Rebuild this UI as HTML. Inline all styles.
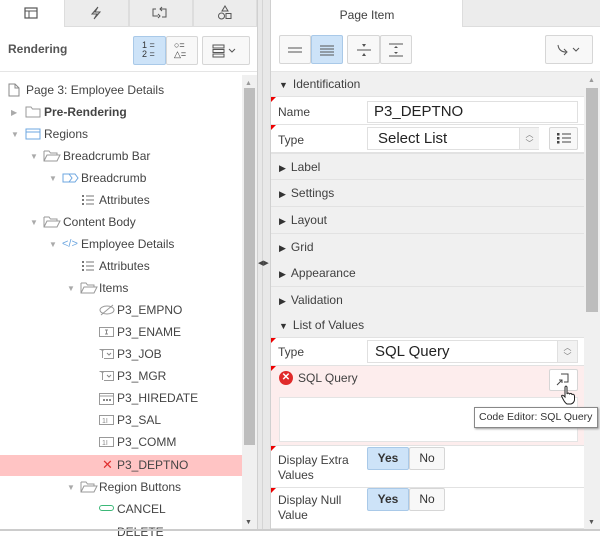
<!DOCTYPE html>
<html><head><style>
*{box-sizing:border-box;margin:0;padding:0}
body{width:600px;height:531px;overflow:hidden;background:#fff;font-family:"Liberation Sans",Arial,sans-serif;font-size:12px;color:#404040;position:relative}
.a{position:absolute}
.tab{position:absolute;top:0;height:27px;background:#ececec;border:1px solid #ddd;border-top:none}
.btn{position:absolute;border:1px solid #d6d6d6;background:#f8f8f8;border-radius:2px}
.row{position:absolute;left:0;height:22px;line-height:22px;white-space:nowrap;color:#444}
.tri{position:absolute;color:#aaa;font-size:8px}
.sec{position:absolute;left:271px;width:313px;height:27px;background:#f0f0f0;border-bottom:1px solid #e2e2e2;line-height:26px;padding-left:8px;color:#404040}
.sec b{font-size:9px;color:#333;margin-right:5px;font-weight:normal}
.prow{position:absolute;left:271px;width:313px;background:#fff;border-bottom:1px solid #e2e2e2}
.red{position:absolute;left:0;top:0;width:0;height:0;border-top:5px solid #e00;border-right:5px solid transparent}
.lbl{position:absolute;left:7px;color:#404040}
.inp{position:absolute;border:1px solid #e0e0e0;background:#fff;font-size:15px;color:#222;padding-left:6px}
</style></head><body>
<div class="a" style="left:0;top:0;width:257px;height:531px;background:#fff"></div>
<div class="tab" style="left:0;width:64px;background:#fff;border:none"></div>
<div class="tab" style="left:64px;width:65px"></div>
<div class="tab" style="left:129px;width:64px"></div>
<div class="tab" style="left:193px;width:64px"></div>
<svg class="a" style="left:24px;top:7px" width="14" height="12"><rect x="1" y="1" width="12" height="10" fill="none" stroke="#555" stroke-width="1.2"/><line x1="1" y1="4" x2="13" y2="4" stroke="#555"/><line x1="5" y1="4" x2="5" y2="11" stroke="#555"/></svg>
<svg class="a" style="left:89px;top:6px" width="14" height="14"><path d="M9 1 L3 8 H8 L5 13 M9 1 L6 6 H11 L5 13" fill="none" stroke="#555"/></svg>
<svg class="a" style="left:152px;top:6px" width="16" height="14"><path d="M4 3 H1 V10 H6 M10 11 H14 V3 H8 M6 8 L8 10 L6 12 M10 1 L8 3 L10 5" fill="none" stroke="#555"/></svg>
<svg class="a" style="left:217px;top:5px" width="16" height="16"><path d="M8 1 L11 6 H5 Z" fill="none" stroke="#555"/><circle cx="4.5" cy="11" r="3" fill="none" stroke="#555"/><rect x="9" y="8.5" width="5" height="5" fill="none" stroke="#555"/></svg>
<div class="a" style="left:0;top:27px;width:257px;height:45px;background:#fff;border-bottom:1px solid #e5e5e5"></div>
<div class="a" style="left:8px;top:42px;font-weight:bold;color:#555">Rendering</div>
<div class="btn" style="left:133px;top:36px;width:33px;height:29px;background:#cde3f8;border-color:#a9c9e8"></div>
<div class="a" style="left:142px;top:41px;font-size:9px;line-height:9px;color:#333">1 =<br>2 =</div>
<div class="btn" style="left:166px;top:36px;width:32px;height:29px"></div>
<div class="a" style="left:174px;top:41px;font-size:9px;line-height:9px;color:#333">○=<br>△=</div>
<div class="btn" style="left:202px;top:36px;width:48px;height:29px"></div>
<svg class="a" style="left:212px;top:44px" width="30" height="14"><rect x="1" y="1" width="11" height="3" fill="none" stroke="#555"/><rect x="1" y="5.5" width="11" height="3" fill="none" stroke="#555"/><rect x="1" y="10" width="11" height="3" fill="none" stroke="#555"/><path d="M17 5 L20 8 L23 5" fill="none" stroke="#555"/></svg>
<div class="a" style="left:242px;top:75px;width:15px;height:456px;background:#f0f0f0"></div>
<div class="a" style="left:245px;top:80px;font-size:7px;color:#999">▲</div>
<div class="a" style="left:244px;top:88px;width:11px;height:357px;background:#bdbdbd"></div>
<div class="a" style="left:245px;top:519px;font-size:7px;color:#555">▼</div>
<div class="row" style="top:455px;width:242px;height:21px;background:#ffc4c4"></div>
<svg class="a" style="left:8px;top:83px" width="12" height="14"><path d="M1 1 H7 L11 5 V13 H1 Z M7 1 V5 H11" fill="none" stroke="#888"/></svg>
<div class="row" style="top:79px;left:26px">Page 3: Employee Details</div>
<div class="tri" style="left:11px;top:108px">▶</div>
<svg class="a" style="left:25px;top:106px" width="16" height="12"><path d="M1 1 H6 L7.5 3 H15 V11 H1 Z" fill="none" stroke="#999"/></svg>
<div class="row" style="top:101px;left:44px;font-weight:bold">Pre-Rendering</div>
<div class="tri" style="left:11px;top:130px">▼</div>
<svg class="a" style="left:25px;top:128px" width="16" height="12"><rect x="1" y="1" width="14" height="10" fill="none" stroke="#6ea7e0"/><line x1="1" y1="4" x2="15" y2="4" stroke="#6ea7e0"/></svg>
<div class="row" style="top:123px;left:44px">Regions</div>
<div class="tri" style="left:30px;top:152px">▼</div>
<svg class="a" style="left:43px;top:150px" width="18" height="12"><path d="M1 1 H6 L7.5 3 H14 V5 M1 1 V11 H14 L17 5 H4 L1 11" fill="none" stroke="#999"/></svg>
<div class="row" style="top:145px;left:63px">Breadcrumb Bar</div>
<div class="tri" style="left:49px;top:174px">▼</div>
<svg class="a" style="left:62px;top:173px" width="17" height="10"><path d="M1 1 H13 L16 5 L13 9 H1 Z M7 1 L10 5 L7 9" fill="none" stroke="#6ea7e0"/></svg>
<div class="row" style="top:167px;left:81px">Breadcrumb</div>
<svg class="a" style="left:81px;top:194px" width="14" height="12"><g fill="#777"><rect x="1" y="1" width="2" height="2"/><rect x="1" y="5" width="2" height="2"/><rect x="1" y="9" width="2" height="2"/></g><g stroke="#777"><line x1="5" y1="2" x2="13" y2="2"/><line x1="5" y1="6" x2="13" y2="6"/><line x1="5" y1="10" x2="13" y2="10"/></g></svg>
<div class="row" style="top:189px;left:99px">Attributes</div>
<div class="tri" style="left:30px;top:218px">▼</div>
<svg class="a" style="left:43px;top:216px" width="18" height="12"><path d="M1 1 H6 L7.5 3 H14 V5 M1 1 V11 H14 L17 5 H4 L1 11" fill="none" stroke="#999"/></svg>
<div class="row" style="top:211px;left:63px">Content Body</div>
<div class="tri" style="left:49px;top:240px">▼</div>
<div class="a" style="left:62px;top:238px;font-size:11px;color:#6ea7e0">&lt;/&gt;</div>
<div class="row" style="top:233px;left:81px">Employee Details</div>
<svg class="a" style="left:81px;top:260px" width="14" height="12"><g fill="#777"><rect x="1" y="1" width="2" height="2"/><rect x="1" y="5" width="2" height="2"/><rect x="1" y="9" width="2" height="2"/></g><g stroke="#777"><line x1="5" y1="2" x2="13" y2="2"/><line x1="5" y1="6" x2="13" y2="6"/><line x1="5" y1="10" x2="13" y2="10"/></g></svg>
<div class="row" style="top:255px;left:99px">Attributes</div>
<div class="tri" style="left:67px;top:284px">▼</div>
<svg class="a" style="left:80px;top:282px" width="18" height="12"><path d="M1 1 H6 L7.5 3 H14 V5 M1 1 V11 H14 L17 5 H4 L1 11" fill="none" stroke="#999"/></svg>
<div class="row" style="top:277px;left:99px">Items</div>
<svg class="a" style="left:99px;top:304px" width="16" height="12"><ellipse cx="8" cy="6" rx="7" ry="4" fill="none" stroke="#999"/><line x1="2" y1="11" x2="14" y2="1" stroke="#999"/></svg>
<div class="row" style="top:299px;left:117px">P3_EMPNO</div>
<svg class="a" style="left:99px;top:327px" width="16" height="10"><rect x=".5" y=".5" width="14" height="9" fill="none" stroke="#999"/><path d="M6 3 H9 M7.5 3 V7 M6 7 H9" stroke="#888"/></svg>
<div class="row" style="top:321px;left:117px">P3_ENAME</div>
<svg class="a" style="left:99px;top:349px" width="16" height="10"><path d="M.5 .5 H14.5 V9.5 H5 M2 1 H5 M3.5 1 V9" fill="none" stroke="#999"/><path d="M8 4 L10 6 L12 4" fill="none" stroke="#888"/></svg>
<div class="row" style="top:343px;left:117px">P3_JOB</div>
<svg class="a" style="left:99px;top:371px" width="16" height="10"><path d="M.5 .5 H14.5 V9.5 H5 M2 1 H5 M3.5 1 V9" fill="none" stroke="#999"/><path d="M8 4 L10 6 L12 4" fill="none" stroke="#888"/></svg>
<div class="row" style="top:365px;left:117px">P3_MGR</div>
<svg class="a" style="left:99px;top:391px" width="16" height="14"><rect x=".5" y="2.5" width="14" height="11" fill="none" stroke="#999"/><line x1="1" y1="5" x2="14" y2="5" stroke="#999"/><g fill="#888"><rect x="4" y="8" width="2" height="2"/><rect x="7" y="8" width="2" height="2"/><rect x="10" y="8" width="2" height="2"/></g></svg>
<div class="row" style="top:387px;left:117px">P3_HIREDATE</div>
<svg class="a" style="left:99px;top:415px" width="16" height="10"><rect x=".5" y=".5" width="14" height="9" fill="none" stroke="#999"/><text x="3" y="8" font-size="7" fill="#888" font-family="Liberation Sans">1I</text></svg>
<div class="row" style="top:409px;left:117px">P3_SAL</div>
<svg class="a" style="left:99px;top:437px" width="16" height="10"><rect x=".5" y=".5" width="14" height="9" fill="none" stroke="#999"/><text x="3" y="8" font-size="7" fill="#888" font-family="Liberation Sans">1I</text></svg>
<div class="row" style="top:431px;left:117px">P3_COMM</div>
<div class="a" style="left:102px;top:457px;color:#e03030;font-size:13px">✕</div>
<div class="row" style="top:454px;left:117px">P3_DEPTNO</div>
<div class="tri" style="left:67px;top:483px">▼</div>
<svg class="a" style="left:80px;top:481px" width="18" height="12"><path d="M1 1 H6 L7.5 3 H14 V5 M1 1 V11 H14 L17 5 H4 L1 11" fill="none" stroke="#999"/></svg>
<div class="row" style="top:476px;left:99px">Region Buttons</div>
<div class="a" style="left:99px;top:505px;width:15px;height:6px;border:1.5px solid #3cb878;border-radius:3px"></div>
<div class="row" style="top:498px;left:117px">CANCEL</div>
<div class="row" style="top:521px;left:117px">DELETE</div>
<div class="a" style="left:257px;top:0;width:14px;height:531px;background:#e8e8e8;border-left:1px solid #d0d0d0;border-right:1px solid #d0d0d0"></div>
<div class="a" style="left:262px;top:0;width:1px;height:531px;background:#d4d4d4"></div>
<div class="a" style="left:258px;top:259px;font-size:7px;color:#444">◀▶</div>
<div class="a" style="left:271px;top:0;width:329px;height:531px;background:#fff"></div>
<div class="a" style="left:462px;top:0;width:138px;height:27px;background:#ececec;border-left:1px solid #ddd;border-bottom:1px solid #ddd"></div>
<div class="a" style="left:272px;top:8px;width:190px;text-align:center">Page Item</div>
<div class="a" style="left:271px;top:71px;width:329px;height:1px;background:#e5e5e5"></div>
<div class="btn" style="left:279px;top:35px;width:32px;height:29px"></div>
<div class="btn" style="left:311px;top:35px;width:32px;height:29px;background:#cde3f8;border-color:#a9c9e8"></div>
<div class="btn" style="left:347px;top:35px;width:33px;height:29px"></div>
<div class="btn" style="left:380px;top:35px;width:32px;height:29px"></div>
<svg class="a" style="left:287px;top:43px" width="120" height="14"><g stroke="#555"><line x1="1" y1="5" x2="15" y2="5"/><line x1="1" y1="9" x2="15" y2="9"/><line x1="33" y1="3" x2="47" y2="3"/><line x1="33" y1="6" x2="47" y2="6"/><line x1="33" y1="9" x2="47" y2="9"/><line x1="33" y1="12" x2="47" y2="12"/><line x1="70" y1="7" x2="84" y2="7"/><line x1="102" y1="1" x2="116" y2="1"/><line x1="102" y1="13" x2="116" y2="13"/></g><path d="M75 1 L77 4 L79 1 Z M75 13 L77 10 L79 13 Z M107 5 L109 3 L111 5 Z M107 9 L109 11 L111 9 Z" fill="#555"/></svg>
<div class="btn" style="left:545px;top:35px;width:48px;height:29px"></div>
<svg class="a" style="left:556px;top:44px" width="30" height="12"><path d="M2 1 Q3 8 10 8 M8 5 L11 8 L8 11" fill="none" stroke="#555"/><path d="M17 4 L20 7 L23 4" fill="none" stroke="#555"/></svg>
<div class="a" style="left:584px;top:72px;width:16px;height:459px;background:#f0f0f0"></div>
<div class="a" style="left:588px;top:77px;font-size:7px;color:#999">▲</div>
<div class="a" style="left:586px;top:88px;width:12px;height:224px;background:#bdbdbd"></div>
<div class="a" style="left:588px;top:519px;font-size:7px;color:#555">▼</div>
<div class="sec" style="top:72px;height:25px;line-height:24px"><b>▼</b>Identification</div>
<div class="prow" style="top:97px;height:28px"><div class="red"></div><div class="lbl" style="top:8px">Name</div><div class="inp" style="left:96px;top:4px;width:211px;height:22px;line-height:20px">P3_DEPTNO</div></div>
<div class="prow" style="top:125px;height:28px"><div class="red"></div><div class="lbl" style="top:8px">Type</div><div class="inp" style="left:96px;top:2px;width:172px;height:23px;line-height:22px;padding-left:10px">Select List</div><div class="a" style="left:248px;top:3px;width:20px;height:21px;background:#f2f2f2;border-left:1px solid #e0e0e0;font-size:8px;line-height:9px;text-align:center;color:#777;padding-top:2px">︿<br>﹀</div><div class="btn" style="left:278px;top:2px;width:29px;height:23px"></div><svg class="a" style="left:285px;top:7px" width="16" height="13"><g fill="#444"><rect x="1" y="1" width="2.5" height="2.5"/><rect x="1" y="5" width="2.5" height="2.5"/><rect x="1" y="9" width="2.5" height="2.5"/></g><g stroke="#444"><line x1="6" y1="2" x2="15" y2="2"/><line x1="6" y1="6" x2="15" y2="6"/><line x1="6" y1="10" x2="15" y2="10"/></g></svg></div>
<div class="sec" style="top:153px;border-top:1px solid #e2e2e2"><b>▶</b>Label</div>
<div class="sec" style="top:180px"><b>▶</b>Settings</div>
<div class="sec" style="top:207px"><b>▶</b>Layout</div>
<div class="sec" style="top:234px"><b>▶</b>Grid</div>
<div class="sec" style="top:260px"><b>▶</b>Appearance</div>
<div class="sec" style="top:287px"><b>▶</b>Validation</div>
<div class="sec" style="top:313px;height:25px;line-height:24px"><b>▼</b>List of Values</div>
<div class="prow" style="top:338px;height:28px"><div class="red"></div><div class="lbl" style="top:7px">Type</div><div class="inp" style="left:96px;top:2px;width:211px;height:23px;line-height:22px;padding-left:7px">SQL Query</div><div class="a" style="left:286px;top:3px;width:20px;height:21px;background:#f2f2f2;border-left:1px solid #e0e0e0;font-size:8px;line-height:9px;text-align:center;color:#777;padding-top:2px">︿<br>﹀</div></div>
<div class="prow" style="top:366px;height:80px;background:#fdeded"><div class="red"></div>
<div class="a" style="left:8px;top:5px;width:14px;height:14px;border-radius:50%;background:#e02a2a;color:#fff;font-size:10px;line-height:14px;text-align:center;font-weight:bold">✕</div>
<div class="a" style="left:27px;top:5px">SQL Query</div>
<div class="btn" style="left:278px;top:3px;width:29px;height:22px;background:#fff"></div>
<svg class="a" style="left:285px;top:7px" width="14" height="14"><path d="M5 1 H12 V9 H8 M1 12 L6 7 M3 7 H6 V10" fill="none" stroke="#444"/></svg>
<div class="a" style="left:8px;top:31px;width:299px;height:45px;background:#fff;border:1px solid #e4e4e4"></div>
</div>
<div class="a" style="left:474px;top:407px;width:124px;height:21px;background:#fff;border:1px solid #888;box-shadow:1px 1px 2px #999;font-size:10.5px;line-height:19px;padding-left:4px;color:#333;white-space:nowrap;overflow:hidden">Code Editor: SQL Query</div>
<svg class="a" style="left:560px;top:385px" width="16" height="20"><path d="M5 2 Q6 0 7 2 V9 Q8 7 9.5 9 Q11 7.5 12 9.5 Q14 8.5 14.5 11 V15 Q14 18 11 19 H7 Q5 18 3 14 L1.5 11 Q2 9.5 4 11 L5 12 Z" fill="#fff" stroke="#222" stroke-width="1"/></svg>
<div class="prow" style="top:446px;height:42px"><div class="red"></div><div class="lbl" style="top:7px;line-height:15px">Display Extra<br>Values</div>
<div class="btn" style="left:96px;top:1px;width:42px;height:23px;background:#cde3f8;border-color:#a9c9e8;text-align:center;line-height:21px;font-weight:bold;color:#333">Yes</div><div class="btn" style="left:138px;top:1px;width:36px;height:23px;text-align:center;line-height:21px;color:#333">No</div></div>
<div class="prow" style="top:488px;height:41px"><div class="red"></div><div class="lbl" style="top:5px;line-height:15px">Display Null<br>Value</div>
<div class="btn" style="left:96px;top:0;width:42px;height:23px;background:#cde3f8;border-color:#a9c9e8;text-align:center;line-height:21px;font-weight:bold;color:#333">Yes</div><div class="btn" style="left:138px;top:0;width:36px;height:23px;text-align:center;line-height:21px;color:#333">No</div></div>
<div class="a" style="left:0;top:529px;width:600px;height:2px;background:#ccc"></div>
</body></html>
